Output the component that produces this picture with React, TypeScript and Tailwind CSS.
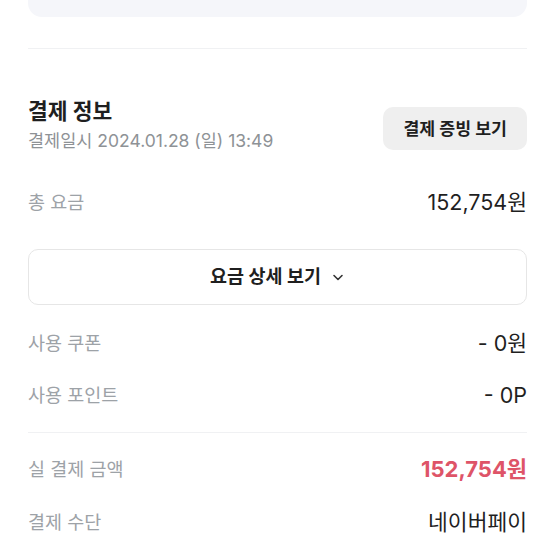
import React from "react";

const font = { fontFamily: '"Inter", "Noto Sans CJK KR", sans-serif' };

function Row({ label, value, valueClass }: { label: string; value: string; valueClass?: string }) {
  return (
    <div className="flex items-center justify-between h-[26px]">
      <span className="text-[18.5px] text-[#9da2a7] leading-[26px]">{label}</span>
      <span className={valueClass ?? "text-[21.5px] text-[#1f1f1f] leading-[26px]"}>{value}</span>
    </div>
  );
}

export default function App() {
  return (
    <div className="w-[555px] h-[555px] bg-white overflow-hidden" style={font}>
      <div className="px-[28px]">
        <div className="h-[17px] rounded-b-[14px] bg-[#f5f6fa]" />
        <div className="mt-[31px] h-px bg-[#f0f1f3]" />
        <div className="mt-[49px] flex items-start justify-between">
          <div className="flex flex-col">
            <span className="text-[21.5px] font-bold text-[#1f1f1f] leading-[26px]">결제 정보</span>
            <span className="mt-[6px] text-[17.5px] text-[#8e9296] leading-[22px]">결제일시 2024.01.28 (일) 13:49</span>
          </div>
          <button className="mt-[9px] h-[43px] px-[20px] rounded-[10px] bg-[#efefef] text-[17.3px] font-bold text-[#1f1f1f]">
            결제 증빙 보기
          </button>
        </div>
        <div className="mt-[37px]">
          <Row label="총 요금" value="152,754원" />
        </div>
        <button className="mt-[34px] w-full h-[56px] rounded-[10px] border border-[#e6e6e6] flex items-center justify-center gap-[10px]">
          <span className="text-[18.5px] font-bold text-[#1f1f1f]">요금 상세 보기</span>
          <svg width="14" height="14" viewBox="0 0 14 14" fill="none">
            <path d="M3 5.5l4 4 4-4" stroke="#333" strokeWidth="1.6" strokeLinecap="round" strokeLinejoin="round" />
          </svg>
        </button>
        <div className="mt-[25px] flex flex-col gap-[26px]">
          <Row label="사용 쿠폰" value="- 0원" />
          <Row label="사용 포인트" value="- 0P" />
        </div>
        <div className="mt-[24px] h-px bg-[#f0f1f3]" />
        <div className="mt-[23px] flex flex-col gap-[27px]">
          <Row label="실 결제 금액" value="152,754원" valueClass="text-[22px] font-bold text-[#de5468] leading-[26px]" />
          <Row label="결제 수단" value="네이버페이" />
        </div>
      </div>
    </div>
  );
}
